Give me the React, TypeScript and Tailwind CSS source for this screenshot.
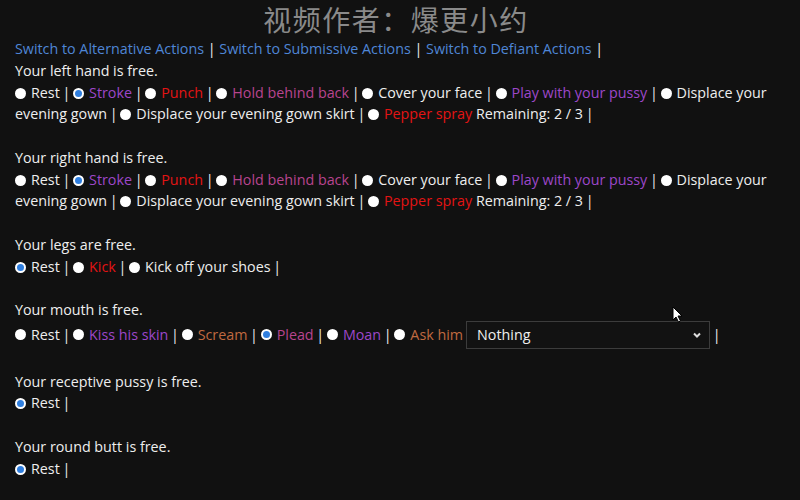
import React from "react";

const Radio = ({ on }: { on?: boolean }) =>
  on ? (
    <span className="inline-block w-[11px] h-[11px] rounded-full bg-white border-[2px] border-white align-[-1px] mr-[5px] relative">
      <span className="absolute inset-0 rounded-full bg-[#2f7fe0]" />
    </span>
  ) : (
    <span className="inline-block w-[11px] h-[11px] rounded-full bg-white align-[-1px] mr-[5px]" />
  );

type Opt = { t: string; c?: string; on?: boolean; extra?: string };

const Sep = ({ last }: { last?: boolean }) => (
  <span className="[word-spacing:-1px]">{last ? " |" : " | "}</span>
);

const Options = ({ opts }: { opts: Opt[] }) => (
  <div>
    {opts.map((o, i) => (
      <React.Fragment key={i}>
        <Radio on={o.on} />
        <span className={o.c ?? "text-[#eeeeee]"}>{o.t}</span>
        {o.extra ? <span> {o.extra}</span> : null}
        <Sep />
      </React.Fragment>
    ))}
  </div>
);

const purple = "text-[#9d47c9]";
const red = "text-[#e31414]";
const pink = "text-[#b8448f]";
const brown = "text-[#c06a40]";

const hands: Opt[] = [
  { t: "Rest" },
  { t: "Stroke", c: purple, on: true },
  { t: "Punch", c: red },
  { t: "Hold behind back", c: pink },
  { t: "Cover your face" },
  { t: "Play with your pussy", c: purple },
  { t: "Displace your evening gown" },
  { t: "Displace your evening gown skirt" },
  { t: "Pepper spray", c: red, extra: "Remaining: 2 / 3" },
];

export default function App() {
  return (
    <div
      className="w-[800px] h-[500px] bg-[#111111] text-[#eeeeee] text-[14.3px] leading-[21.75px] px-[15px] overflow-hidden relative"
      style={{ fontFamily: '"Open Sans", "Noto Sans CJK SC", sans-serif' }}
    >
      <div className="h-[38px] flex items-center justify-center text-[28px] leading-[36px] text-[#8a8a8a] tracking-[1.5px] pr-[8px]" style={{ fontFamily: '"Noto Sans CJK SC", sans-serif' }}>
        视频作者：爆更小约
      </div>
      <div className="text-[#4f86d6]">
        Switch to Alternative Actions<span className="text-[#eeeeee]"> | </span>Switch to Submissive Actions
        <span className="text-[#eeeeee]"> | </span>Switch to Defiant Actions<span className="text-[#eeeeee]"> |</span>
      </div>

      <div>Your left hand is free.</div>
      <Options opts={hands} />
      <div className="h-[21.75px]" />

      <div>Your right hand is free.</div>
      <Options opts={hands} />
      <div className="h-[21.75px]" />

      <div>Your legs are free.</div>
      <Options opts={[{ t: "Rest", on: true }, { t: "Kick", c: red }, { t: "Kick off your shoes" }]} />
      <div className="h-[21.75px]" />

      <div>Your mouth is free.</div>
      <div className="flex items-center h-[28px] whitespace-pre">
        <Radio />
        <span>Rest</span>
        <Sep />
        <Radio />
        <span className={purple}>Kiss his skin</span>
        <Sep />
        <Radio />
        <span className={brown}>Scream</span>
        <Sep />
        <Radio on />
        <span className={pink}>Plead</span>
        <Sep />
        <Radio />
        <span className={purple}>Moan</span>
        <Sep />
        <Radio />
        <span className={brown}>Ask him</span>
        <div className="ml-[3px] w-[244px] h-[28px] border border-[#3c3c3c] bg-[#121212] flex items-center justify-between pl-[10px] pr-[6px]">
          <span>Nothing</span>
          <svg width="12" height="12" viewBox="0 0 12 12" fill="none" stroke="#dddddd" strokeWidth="2">
            <path d="M3 4.5 L6 7.5 L9 4.5" />
          </svg>
        </div>
        <Sep last />
      </div>
      <div className="h-[21.75px]" />

      <div>Your receptive pussy is free.</div>
      <Options opts={[{ t: "Rest", on: true }]} />
      <div className="h-[21.75px]" />

      <div>Your round butt is free.</div>
      <Options opts={[{ t: "Rest", on: true }]} />

      <svg className="absolute left-[672px] top-[306px]" width="12" height="17" viewBox="0 0 12 17">
        <path d="M1 1 L1 14 L4 11 L6.5 16 L8.5 15 L6 10 L10 10 Z" fill="#ffffff" stroke="#000" strokeWidth="1" />
      </svg>
    </div>
  );
}
